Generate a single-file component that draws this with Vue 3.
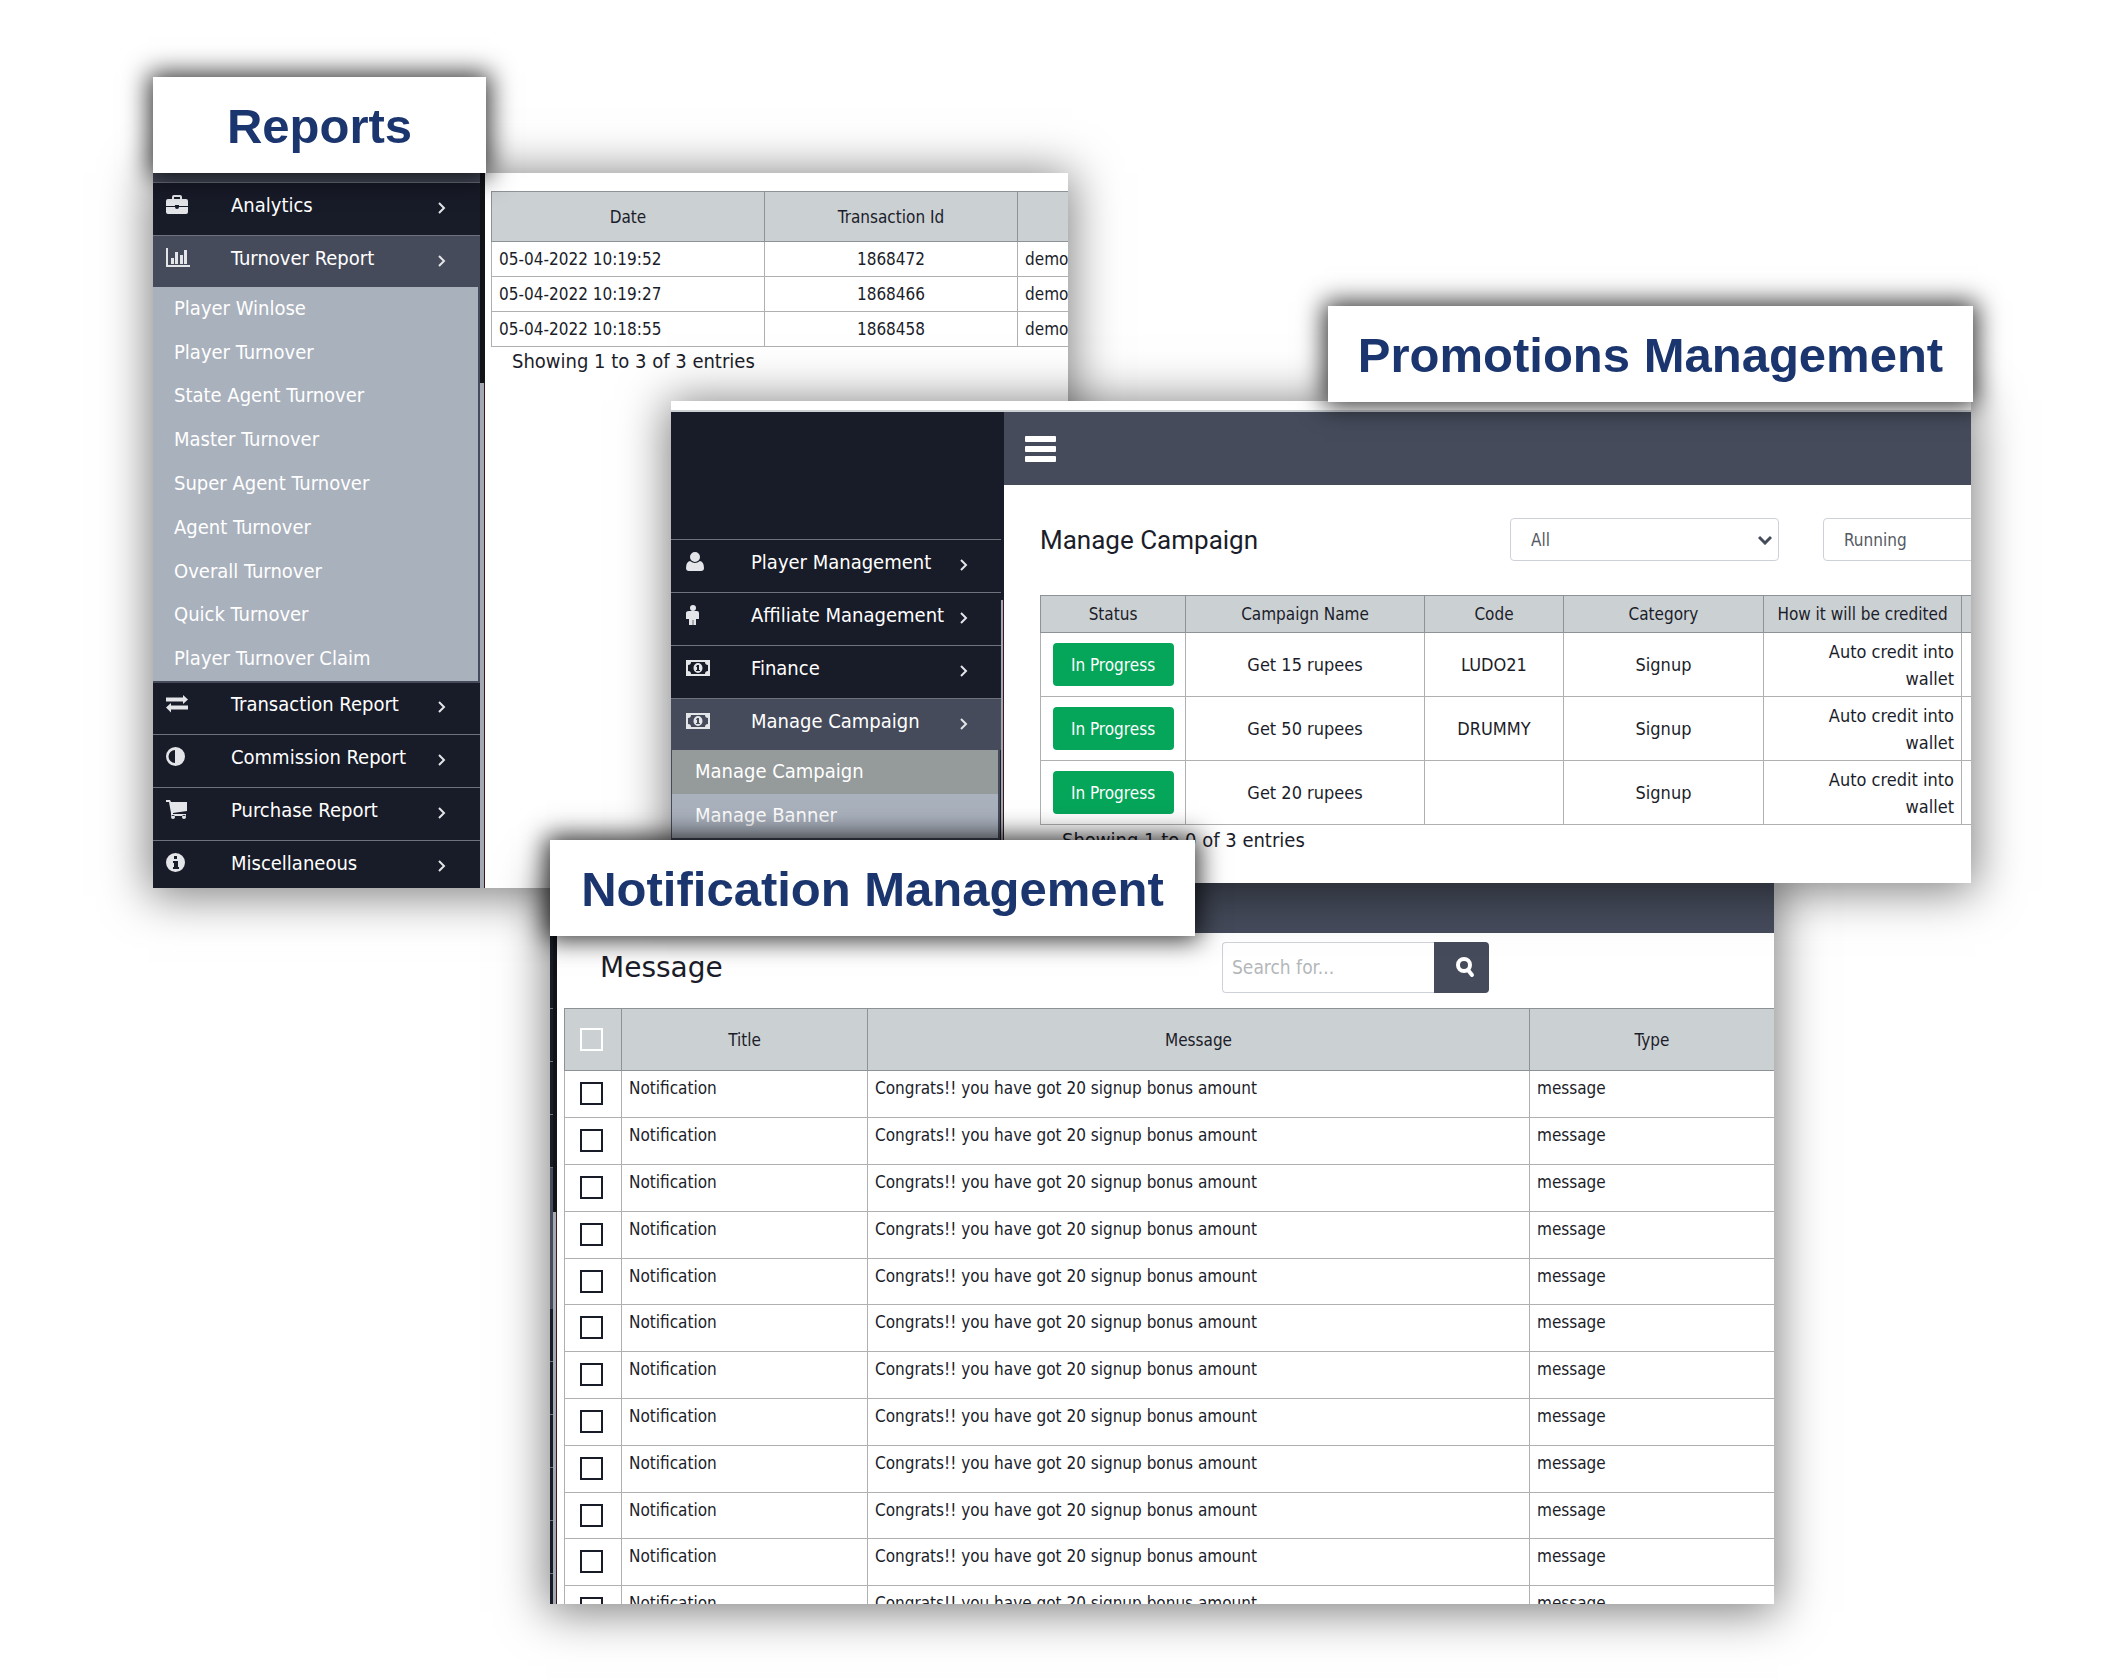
<script setup>
import { ref } from 'vue'

const icons = {
  briefcase: 'M2 4h4V2q0-2 2-2h6q2 0 2 2v2h4q2 0 2 2v5h-9v-1H9v1H0V6q0-2 2-2zM8 2v2h6V2zM0 12h9q0 2 2 2t2-2h9v5q0 2-2 2H2q-2 0-2-2z',
  chart: 'M0 0h2v17h22v2H0zM5 10h3v6H5zM9 4h3v12H9zM14 7h3v9h-3zM18 2h3v14h-3z',
  exchange: 'M0 3.500h17V1l5 4.500-5 4.500V7.500H0zM22 11.500v4H5v3l-5-5L5 9v2.500z',
  contrast: 'M9.500 0a9.500 9.500 0 1 1 0 19 9.500 9.500 0 0 1 0-19zM9 3a6.500 6.500 0 0 0 0 13z',
  cart: 'M0 0h4l1 2h16v9L7 13v1h13v2H5v-3L3 2H0zM5 17a2 2 0 1 1 4 0 2 2 0 0 1-4 0zM16 17a2 2 0 1 1 4 0 2 2 0 0 1-4 0z',
  info: 'M9.500 0a9.500 9.500 0 1 1 0 19 9.500 9.500 0 0 1 0-19zM8 3v3h3V3zM7 8v2h1v4H7v2h6v-2h-1V8z',
  user: 'M9 0a5 5 0 1 1 0 10A5 5 0 0 1 9 0zM4 9q5 4 10 0 4 1 4 7 0 3-3 3H3q-3 0-3-3 0-6 4-7z',
  male: 'M7 0a3 3 0 1 1 0 6 3 3 0 0 1 0-6zM3 6h8q2 0 2 2v6h-3v6H7.300v-5h-.600v5H3v-6H0V8q0-2 3-2z',
  money: 'M0 2h24v16H0zM5 4q0 3-3 3v6q3 0 3 3h14q0-3 3-3V7q-3 0-3-3zM12 5a4.500 5 0 1 1 0 10 4.500 5 0 0 1 0-10zM11 7l-1 2h1v3h-1v1h4v-1h-1V7z'
}

const reportMenu = [
  { label: 'Analytics', icon: 'briefcase' },
  {
    label: 'Turnover Report',
    icon: 'chart',
    open: true,
    children: [
      'Player Winlose',
      'Player Turnover',
      'State Agent Turnover',
      'Master Turnover',
      'Super Agent Turnover',
      'Agent Turnover',
      'Overall Turnover',
      'Quick Turnover',
      'Player Turnover Claim'
    ]
  },
  { label: 'Transaction Report', icon: 'exchange' },
  { label: 'Commission Report', icon: 'contrast' },
  { label: 'Purchase Report', icon: 'cart' },
  { label: 'Miscellaneous', icon: 'info' }
]

const promoMenu = [
  { label: 'Player Management', icon: 'user' },
  { label: 'Affiliate Management', icon: 'male' },
  { label: 'Finance', icon: 'money' },
  {
    label: 'Manage Campaign',
    icon: 'money',
    open: true,
    current: 'Manage Campaign',
    children: ['Manage Campaign', 'Manage Banner']
  }
]

const transactions = [
  { date: '05-04-2022 10:19:52', id: '1868472', user: 'demo' },
  { date: '05-04-2022 10:19:27', id: '1868466', user: 'demo' },
  { date: '05-04-2022 10:18:55', id: '1868458', user: 'demo' }
]

const campaigns = [
  { name: 'Get 15 rupees', code: 'LUDO21' },
  { name: 'Get 50 rupees', code: 'DRUMMY' },
  { name: 'Get 20 rupees', code: '' }
]

const messages = ref(Array.from({ length: 12 }, (_, id) => ({ id, checked: false })))
const campaignType = ref('All')
const campaignState = ref('Running')
const query = ref('')
</script>

<template>
  <main class="collage">
    <section class="window reports" aria-labelledby="reports-title">
      <nav class="sidebar" aria-label="Reports">
        <div class="previous-item"></div>
        <template v-for="item in reportMenu" :key="item.label">
          <a href="#" class="item" :class="{ open: item.open }">
            <span class="icon">
              <svg width="24" height="20" viewBox="0 0 24 20" aria-hidden="true"><path fill-rule="evenodd" :d="icons[item.icon]" /></svg>
            </span>
            <span class="text">{{ item.label }}</span>
            <svg class="chevron" width="10" height="14" viewBox="0 0 10 14" aria-hidden="true"><path d="M2 2l5 5-5 5" /></svg>
          </a>
          <div v-if="item.children" class="submenu">
            <a v-for="child in item.children" :key="child" href="#">{{ child }}</a>
          </div>
        </template>
      </nav>
      <div class="scrollbar"><div class="thumb"></div></div>
      <div class="content">
        <table class="grid transactions">
          <colgroup><col class="date" /><col class="id" /><col /></colgroup>
          <thead>
            <tr><th>Date</th><th>Transaction Id</th><th></th></tr>
          </thead>
          <tbody>
            <tr v-for="row in transactions" :key="row.id">
              <td>{{ row.date }}</td>
              <td class="center">{{ row.id }}</td>
              <td>{{ row.user }}</td>
            </tr>
          </tbody>
        </table>
        <p class="summary">Showing 1 to 3 of 3 entries</p>
      </div>
    </section>
    <h2 id="reports-title" class="label reports-label">Reports</h2>

    <section class="window notifications" aria-labelledby="notifications-title">
      <div class="topbar"></div>
      <div class="body">
        <div class="rail">
          <div v-for="n in 12" :key="n" :class="{ lit: n > 4 && n < 8 }"></div>
        </div>
        <div class="scrollbar"><div class="thumb"></div></div>
        <div class="content">
          <header class="heading">
            <h3>Message</h3>
            <form class="search" @submit.prevent>
              <input v-model="query" type="text" placeholder="Search for..." aria-label="Search messages" />
              <button type="submit" aria-label="Search">
                <svg width="22" height="22" viewBox="0 0 22 22" aria-hidden="true"><circle cx="10" cy="9" r="6" /><path d="M14 14l4 5" /></svg>
              </button>
            </form>
          </header>
          <table class="grid inbox">
            <colgroup><col class="pick" /><col class="title" /><col class="message" /><col /></colgroup>
            <thead>
              <tr>
                <th class="tick"><input type="checkbox" aria-label="Select all messages" /></th>
                <th>Title</th>
                <th>Message</th>
                <th>Type</th>
              </tr>
            </thead>
            <tbody>
              <tr v-for="message in messages" :key="message.id">
                <td class="tick"><input v-model="message.checked" type="checkbox" aria-label="Select message" /></td>
                <td>Notification</td>
                <td>Congrats!! you have got 20 signup bonus amount</td>
                <td>message</td>
              </tr>
            </tbody>
          </table>
        </div>
      </div>
    </section>

    <section class="window promotions" aria-labelledby="promotions-title">
      <div class="strip"></div>
      <nav class="sidebar" aria-label="Promotions">
        <div class="brand"></div>
        <template v-for="item in promoMenu" :key="item.label">
          <a href="#" class="item" :class="{ open: item.open }">
            <span class="icon">
              <svg width="24" height="20" viewBox="0 0 24 20" aria-hidden="true"><path fill-rule="evenodd" :d="icons[item.icon]" /></svg>
            </span>
            <span class="text">{{ item.label }}</span>
            <svg class="chevron" width="10" height="14" viewBox="0 0 10 14" aria-hidden="true"><path d="M2 2l5 5-5 5" /></svg>
          </a>
          <div v-if="item.children" class="submenu">
            <a v-for="child in item.children" :key="child" href="#" :class="{ current: child === item.current }">{{ child }}</a>
          </div>
        </template>
      </nav>
      <div class="scrollbar"><div class="thumb"></div></div>
      <div class="main">
        <div class="topbar">
          <button type="button" class="menu" aria-label="Toggle menu"><span></span><span></span><span></span></button>
        </div>
        <div class="content">
          <header class="heading">
            <h3>Manage Campaign</h3>
            <div class="select">
              <select v-model="campaignType" aria-label="Campaign type"><option>All</option></select>
              <svg width="14" height="10" viewBox="0 0 14 10" aria-hidden="true"><path d="M1 2l6 6 6-6" /></svg>
            </div>
            <div class="select">
              <select v-model="campaignState" aria-label="Campaign state"><option>Running</option></select>
              <svg width="14" height="10" viewBox="0 0 14 10" aria-hidden="true"><path d="M1 2l6 6 6-6" /></svg>
            </div>
          </header>
          <table class="grid campaigns">
            <colgroup><col class="status" /><col class="name" /><col class="code" /><col class="category" /><col class="credit" /><col /></colgroup>
            <thead>
              <tr>
                <th>Status</th><th>Campaign Name</th><th>Code</th><th>Category</th><th>How it will be credited</th><th></th>
              </tr>
            </thead>
            <tbody>
              <tr v-for="row in campaigns" :key="row.name">
                <td><button type="button" class="state">In Progress</button></td>
                <td>{{ row.name }}</td>
                <td>{{ row.code }}</td>
                <td>Signup</td>
                <td class="right">Auto credit into wallet</td>
                <td></td>
              </tr>
            </tbody>
          </table>
          <p class="summary">Showing 1 to 0 of 3 entries</p>
        </div>
      </div>
    </section>
    <h2 id="promotions-title" class="label promotions-label">Promotions Management</h2>
    <h2 id="notifications-title" class="label notifications-label">Notification Management</h2>
  </main>
</template>

<style>
body {
  margin: 0;
  background: #fff;
}
</style>

<style scoped>
* {
  box-sizing: border-box;
}

h2,
h3,
p {
  margin: 0;
}

a {
  color: inherit;
  text-decoration: none;
}

button,
input,
select {
  font: inherit;
}

/* Overlapping windows share one grid; each column and row line is a window edge. */
.collage {
  display: grid;
  grid-template-columns:
    153fr [reports-start] 333fr [reports-tab] 64fr [notify-start] 121fr [promo-start]
    397fr [reports-end] 127fr [notify-tab] 133fr [promo-tab] 446fr [notify-end] 197fr
    [promo-end] 2fr [promo-tab-end] 153fr;
  grid-template-rows:
    77px [a] 96px [b] 133px [c] 95px [d] 1px [e] 438px [f] 30px [g] 13px [h] 5px [i]
    48px [j] 668px [k] 76px;
  color: #1b1d2a;
  font: 17px "DejaVu Sans Condensed", "Noto Sans", sans-serif;
  overflow: hidden;
}

.window {
  display: flex;
  min-width: 0;
  overflow: hidden;
  background: #fff;
  box-shadow: 0 4px 44px 4px rgba(0, 0, 0, 0.5);
}

.reports {
  grid-column: reports-start / reports-end;
  grid-row: b / i;
}

.notifications {
  grid-column: notify-start / notify-end;
  grid-row: g / k;
  flex-direction: column;
}

.promotions {
  grid-column: promo-start / promo-end;
  grid-row: d / h;
  flex-wrap: wrap;
  align-content: flex-start;
}

.label {
  display: flex;
  align-items: center;
  justify-content: center;
  min-width: 0;
  background: #fff;
  box-shadow: 0 0 24px 4px rgba(0, 0, 0, 0.8);
  color: #1b356f;
  font: bold 49px "Liberation Sans", Arial, sans-serif;
  white-space: nowrap;
  padding-top: 2px;
}

.reports-label {
  grid-column: reports-start / reports-tab;
  grid-row: a / b;
}

.promotions-label {
  grid-column: promo-tab / promo-tab-end;
  grid-row: c / e;
}

.notifications-label {
  grid-column: notify-start / notify-tab;
  grid-row: f / j;
}

/* Sidebars */
.sidebar {
  flex: none;
  width: 327px;
  height: 715px;
  background: #181b28;
  color: #fff;
  font-size: 20px;
}

.previous-item {
  height: 9px;
  background: #454b5b;
}

.item {
  display: flex;
  align-items: center;
  height: 53px;
  padding: 0 33px 8px 13px;
  border-top: 1px solid #6e727d;
}

.item.open {
  height: 52px;
  background: #454b5b;
}

.icon {
  flex: none;
  width: 65px;
  height: 20px;
  fill: #e4e5e8;
}

.icon svg,
.chevron {
  display: block;
}

.text {
  flex: 1;
  white-space: nowrap;
}

.chevron {
  flex: none;
  margin-top: 6px;
  fill: none;
  stroke: #e4e5e8;
  stroke-width: 2;
}

.submenu {
  display: flex;
  flex-direction: column;
  height: 394px;
  margin-right: 2px;
  background: #a9b1bd;
  outline: 2px solid #454b5b;
}

.submenu a {
  display: flex;
  flex: 1;
  align-items: center;
  padding: 0 0 2px 21px;
}

.scrollbar {
  flex: none;
  width: 5px;
  padding-top: 210px;
  background: #121318;
}

.thumb {
  height: 100%;
  background: #a3a8b2;
  border-right: 1px solid #3a1a1a;
}

/* Data tables */
.grid {
  width: 100%;
  border-collapse: collapse;
  table-layout: fixed;
}

.grid th,
.grid td {
  padding: 0 7px;
  border: 1px solid #aeb0b2;
  white-space: nowrap;
}

.grid th {
  border-color: #8d9296;
  background: #cbd0d3;
  font-weight: normal;
}

.grid th:last-child,
.grid td:last-child {
  border-right: 0;
}

.center {
  text-align: center;
}

.summary {
  font-size: 20px;
  line-height: 28px;
}

/* Reports */
.reports .content {
  flex: 1;
  min-width: 0;
  padding: 18px 0 0 6px;
}

.transactions .date {
  width: 273px;
}

.transactions .id {
  width: 253px;
}

.transactions th {
  height: 50px;
}

.transactions td {
  height: 35px;
}

.reports .summary {
  padding-left: 21px;
}

/* Promotions */
.strip {
  width: 100%;
  height: 11px;
  border-bottom: 2px solid #cbd0d3;
}

.promotions .sidebar {
  width: 330px;
  height: 471px;
}

.promotions .item {
  padding: 0 32px 8px 15px;
}

.promotions .submenu {
  height: 88px;
  margin: 0 3px 0 1px;
}

.promotions .submenu a {
  padding-left: 23px;
}

.submenu .current {
  background: #959a9b;
}

.brand {
  height: 127px;
}

.promotions .scrollbar {
  width: 3px;
  height: 471px;
  padding-top: 188px;
  background: #181b28;
}

.main {
  flex: 1;
  min-width: 0;
}

.topbar {
  flex: none;
  display: flex;
  align-items: center;
  height: 73px;
  background: #454b5b;
}

.menu {
  display: flex;
  flex-direction: column;
  justify-content: space-between;
  width: 31px;
  height: 26px;
  margin-left: 21px;
  padding: 0;
  border: 0;
  background: none;
}

.menu span {
  height: 6px;
  border-radius: 1px;
  background: #fff;
}

.promotions .content {
  padding: 33px 0 0 36px;
}

.promotions .heading {
  display: flex;
  align-items: center;
  height: 43px;
  gap: 44px;
  margin-bottom: 34px;
}

.promotions h3 {
  flex: none;
  width: 426px;
  font: 26px Roboto, "Liberation Sans", sans-serif;
}

.select {
  display: grid;
  flex: none;
  align-items: center;
  width: 269px;
}

.select select,
.select svg {
  grid-area: 1 / 1;
}

.select select {
  width: 100%;
  height: 43px;
  padding: 0 20px;
  border: 1px solid #ced2d8;
  border-radius: 4px;
  appearance: none;
  background: #fff;
  color: #555a63;
}

.select svg {
  justify-self: end;
  margin-right: 7px;
  fill: none;
  stroke: #454b5b;
  stroke-width: 3;
  pointer-events: none;
}

.campaigns {
  font-size: 18px;
  text-align: center;
}

.campaigns .status {
  width: 145px;
}

.campaigns .name {
  width: 239px;
}

.campaigns .code {
  width: 139px;
}

.campaigns .category {
  width: 200px;
}

.campaigns .credit {
  width: 198px;
}

.campaigns th {
  height: 37px;
  padding: 0;
  font-size: 17px;
}

.campaigns td {
  height: 64px;
}

.campaigns .right {
  padding-left: 40px;
  line-height: 27px;
  text-align: right;
  white-space: normal;
}

.state {
  width: 121px;
  height: 43px;
  padding: 0;
  border: 0;
  border-radius: 4px;
  background: #05a55a;
  color: #fff;
  font-size: 17px;
}

.promotions .summary {
  padding: 1px 0 0 22px;
}

/* Notifications */
.notifications .topbar {
  height: 63px;
}

.body {
  display: flex;
  flex: 1;
  min-height: 0;
}

.rail {
  flex: none;
  width: 3px;
  padding-top: 23px;
  background: #181b28;
}

.rail div {
  height: 53px;
  border-bottom: 1px solid #6e727d;
}

.rail .lit {
  height: 47px;
  border-color: #454b5b;
  background: #454b5b;
}

.notifications .scrollbar {
  width: 4px;
  padding-top: 279px;
}

.notifications .content {
  flex: 1;
  min-width: 0;
  padding-left: 7px;
}

.notifications .heading {
  display: flex;
  align-items: center;
  height: 75px;
  padding: 0 0 7px 36px;
}

.notifications h3 {
  flex: none;
  width: 622px;
  font: 28px "DejaVu Sans", sans-serif;
}

.search {
  display: flex;
  height: 51px;
}

.search input {
  width: 212px;
  padding: 0 9px;
  border: 1px solid #ced2d8;
  border-right: 0;
  border-radius: 4px 0 0 4px;
  background: #fff;
  font-size: 19px;
}

.search input::placeholder {
  color: #b4b7ba;
}

.search button {
  display: flex;
  align-items: center;
  justify-content: center;
  width: 55px;
  padding: 0 0 0 6px;
  border: 0;
  border-radius: 0 4px 4px 0;
  background: #454b5b;
}

.search svg {
  fill: none;
  stroke: #fff;
  stroke-width: 4;
  stroke-linecap: round;
}

.inbox .pick {
  width: 57px;
}

.inbox .title {
  width: 246px;
}

.inbox .message {
  width: 662px;
}

.inbox th {
  height: 62px;
}

.inbox td {
  height: 47px;
  padding-bottom: 12px;
}

.inbox tr:nth-child(5n) td {
  height: 46px;
}

.inbox input {
  display: block;
  width: 23px;
  height: 23px;
  margin: 0 auto;
  border: 2px solid #181b28;
  appearance: none;
}

.inbox .tick {
  padding: 0 3px 1px 0;
}

.inbox th input {
  border-color: #fff;
}

.inbox input:checked {
  background: #454b5b;
}
</style>
